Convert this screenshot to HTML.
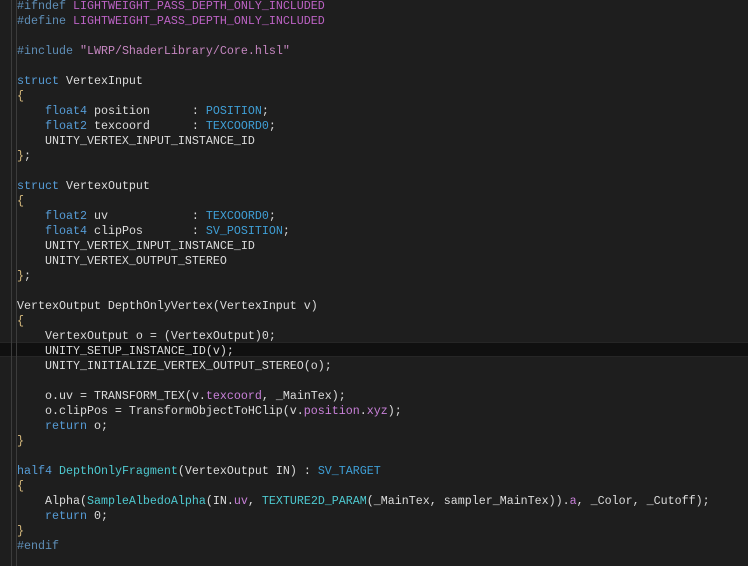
<!DOCTYPE html>
<html><head><style>
html,body{margin:0;padding:0;background:#1e1e1e;width:748px;height:566px;overflow:hidden}
.g1{position:absolute;left:11px;top:0;width:1px;height:566px;background:#3c3c3c}
.g2{position:absolute;left:16px;top:0;width:1px;height:566px;background:#3c3c3c}
.hl{position:absolute;left:0;top:342px;width:748px;height:15px;background:#101010;border-top:1px solid #262626;border-bottom:1px solid #262626;box-sizing:border-box}
pre{position:absolute;left:17px;top:-1px;margin:0;font-family:"Liberation Mono",monospace;font-size:11.67px;line-height:15px;color:#dcdcdc;white-space:pre}
.p{color:#5f8fb8}.m{color:#bd63c5}.s{color:#c586c0}.k{color:#569cd6}.t{color:#3f9fd6}.f{color:#4ec9d0}.b{color:#d7ba7d}.v{color:#c880d8}
</style></head><body>
<div class="hl"></div><div class="g1"></div><div class="g2"></div>
<pre><span class="p">#ifndef</span> <span class="m">LIGHTWEIGHT_PASS_DEPTH_ONLY_INCLUDED</span>
<span class="p">#define</span> <span class="m">LIGHTWEIGHT_PASS_DEPTH_ONLY_INCLUDED</span>

<span class="p">#include</span> <span class="s">"LWRP/ShaderLibrary/Core.hlsl"</span>

<span class="k">struct</span> VertexInput
<span class="b">{</span>
    <span class="k">float4</span> position      : <span class="t">POSITION</span>;
    <span class="k">float2</span> texcoord      : <span class="t">TEXCOORD0</span>;
    UNITY_VERTEX_INPUT_INSTANCE_ID
<span class="b">}</span>;

<span class="k">struct</span> VertexOutput
<span class="b">{</span>
    <span class="k">float2</span> uv            : <span class="t">TEXCOORD0</span>;
    <span class="k">float4</span> clipPos       : <span class="t">SV_POSITION</span>;
    UNITY_VERTEX_INPUT_INSTANCE_ID
    UNITY_VERTEX_OUTPUT_STEREO
<span class="b">}</span>;

VertexOutput DepthOnlyVertex(VertexInput v)
<span class="b">{</span>
    VertexOutput o = (VertexOutput)0;
    UNITY_SETUP_INSTANCE_ID(v);
    UNITY_INITIALIZE_VERTEX_OUTPUT_STEREO(o);

    o.uv = TRANSFORM_TEX(v.<span class="v">texcoord</span>, _MainTex);
    o.clipPos = TransformObjectToHClip(v.<span class="v">position</span>.<span class="v">xyz</span>);
    <span class="k">return</span> o;
<span class="b">}</span>

<span class="k">half4</span> <span class="f">DepthOnlyFragment</span>(VertexOutput IN) : <span class="t">SV_TARGET</span>
<span class="b">{</span>
    Alpha(<span class="f">SampleAlbedoAlpha</span>(IN.<span class="v">uv</span>, <span class="f">TEXTURE2D_PARAM</span>(_MainTex, sampler_MainTex)).<span class="v">a</span>, _Color, _Cutoff);
    <span class="k">return</span> 0;
<span class="b">}</span>
<span class="p">#endif</span>
</pre>
</body></html>
